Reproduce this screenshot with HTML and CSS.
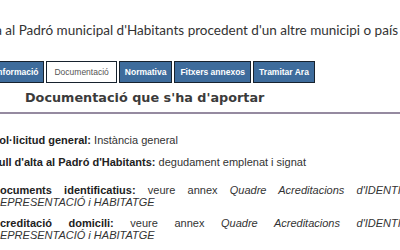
FILE: index.html
```html
<!DOCTYPE html>
<html lang="ca">
<head>
<meta charset="UTF-8">
<meta name="viewport" content="width=device-width, initial-scale=1.0">
<title>Alta al Padró municipal</title>
<link rel="stylesheet" href="styles.css">
</head>
<body>

<div id="tramit">
    <h1 class="titol">Alta al Padró municipal d'Habitants procedent d'un altre municipi o país</h1>

    <ul class="pestanyes">
        <li class="pestanya">Informació</li>
        <li class="pestanya activa">Documentació</li>
        <li class="pestanya">Normativa</li>
        <li class="pestanya">Fitxers annexos</li>
        <li class="pestanya">Tramitar Ara</li>
    </ul>

    <h2 class="apartat">Documentació que s'ha d'aportar</h2>

    <div class="documents">
        <p><b>Sol·licitud general:</b> Instància general</p>
        <p class="separat"><b>Full d'alta al Padró d'Habitants:</b> degudament emplenat i signat</p>
        <p><b>Documents identificatius:</b> veure annex <i>Quadre Acreditacions d'IDENTITAT, REPRESENTACIÓ i HABITATGE</i></p>
        <p><b>Acreditació domicili:</b> veure annex <i>Quadre Acreditacions d'IDENTITAT, REPRESENTACIÓ i HABITATGE</i></p>
    </div>
</div>

</body>
</html>
```

FILE: styles.css
```css
body {
    margin: 0;
    font-family: "Liberation Sans", Arial, sans-serif;
    color: #333;
    background: #fff;
    overflow: hidden;
}
#tramit {
    margin-left: -8px;
    width: 430px;
}
.titol {
    margin: 21px 0 0 -14px;
    font-family: Lato, "Open Sans", sans-serif;
    font-size: 13.5px;
    font-weight: normal;
    line-height: 18px;
    color: #333;
    white-space: nowrap;
}
.pestanyes {
    display: flex;
    gap: 2px;
    list-style: none;
    margin: 22px 0 0 -3px;
    padding: 0;
}
.pestanya {
    height: 20px;
    line-height: 20px;
    padding: 0 5px;
    background-color: #3e6c9c;
    border: 1px solid #17222e;
    color: #fff;
    font-size: 8.5px;
    font-weight: bold;
}
.pestanya.activa {
    background-color: #fff;
    color: #555;
    font-weight: normal;
    padding: 0 7px;
}
.apartat {
    margin: 7px 0 0 0;
    padding: 0 0 6px 33px;
    border-bottom: 2px solid #958aa0;
    font-family: "DejaVu Sans", Verdana, sans-serif;
    font-size: 12.8px;
    font-weight: bold;
    color: #3b3b3b;
    line-height: 16px;
}
.documents {
    margin-top: 20px;
    font-size: 11px;
    line-height: 12px;
    text-align: justify;
}
.documents p {
    margin: 0 0 9px 0;
}
.documents p:first-child {
    margin-bottom: 10px;
}
.documents p.separat {
    margin-bottom: 16px;
}
.documents b {
    color: #222;
}
```
